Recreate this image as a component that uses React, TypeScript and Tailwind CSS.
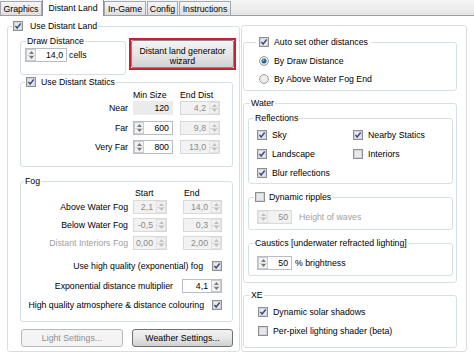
import type { ReactNode } from "react";

function Check({ on }: { on?: boolean }) {
  return (
    <svg width="10" height="10" viewBox="0 0 10 10" className="shrink-0">
      <rect x="0.5" y="0.5" width="9" height="9" fill="#fdfdfd" stroke="#8e8f8f" />
      <rect x="1.5" y="1.5" width="7" height="7" fill="#e6e8eb" stroke="#d2d4d8" />
      {on && <path d="M2.4 4.9 L4.1 7 L7.7 2.5" fill="none" stroke="#3c4e8a" strokeWidth="1.5" />}
    </svg>
  );
}

function Radio({ on }: { on?: boolean }) {
  return (
    <svg width="10" height="10" viewBox="0 0 10 10" className="shrink-0">
      <circle cx="5" cy="5" r="4.4" fill="#eceef0" stroke="#8e8f8f" strokeWidth="0.9" />
      {on && <circle cx="5" cy="5" r="2.5" fill="#2a6290" />}
      {on && <circle cx="4.4" cy="4.3" r="1" fill="#7fb8d8" />}
    </svg>
  );
}

function Arrows({ disabled }: { disabled?: boolean }) {
  const c = disabled ? "#c0c0c0" : "#7a7a7a";
  return (
    <div
      className={`flex flex-col w-[10px] h-full border ${
        disabled ? "border-[#e2e2e2] bg-[#f1f1f1]" : "border-[#c9ccd2] bg-[#f2f2f2]"
      }`}
    >
      <div className="flex-1 flex items-center justify-center border-b border-[#d6d6d6]">
        <svg width="5" height="3" viewBox="0 0 5 3">
          <path d="M0 3 L2.5 0 L5 3Z" fill={c} />
        </svg>
      </div>
      <div className="flex-1 flex items-center justify-center">
        <svg width="5" height="3" viewBox="0 0 5 3">
          <path d="M0 0 L2.5 3 L5 0Z" fill={c} />
        </svg>
      </div>
    </div>
  );
}

function Spin({
  value,
  className,
  side = "left",
  disabled,
  bare,
}: {
  value: string;
  className: string;
  side?: "left" | "right" | "none";
  disabled?: boolean;
  bare?: boolean;
}) {
  const box = bare
    ? "bg-[#ebebeb] border-[#ebebeb] text-black"
    : disabled
    ? "bg-[#f2f2f2] border-[#d9d9d9] text-[#8c8c8c]"
    : "bg-white border-[#b9bcc4] text-black";
  return (
    <div className={`flex items-stretch h-[14px] border shrink-0 ${box} ${className}`}>
      {side === "left" && <Arrows disabled={disabled} />}
      <div className="flex-1 flex items-center justify-end pr-[3px]">{value}</div>
      {side === "right" && <Arrows disabled={disabled} />}
    </div>
  );
}

function Group({
  legend,
  className,
  legendClass,
  children,
}: {
  legend: ReactNode;
  className: string;
  legendClass: string;
  children?: ReactNode;
}) {
  return (
    <fieldset className={`border border-[#d5dfe5] rounded-[3px] shrink-0 ${className}`}>
      <legend className={`px-[1px] leading-[10px] ${legendClass}`}>{legend}</legend>
      {children}
    </fieldset>
  );
}

function Tab({ label, active, className }: { label: string; active?: boolean; className: string }) {
  return (
    <div
      className={`flex items-center justify-center border border-b-0 shrink-0 ${
        active
          ? "h-[17px] -mb-[1px] bg-white border-[#8e939c] relative z-10"
          : "h-[14px] bg-gradient-to-b from-[#f6f6f6] to-[#dedede] border-[#a3a7ae]"
      } ${className}`}
    >
      {label}
    </div>
  );
}

function Row({ children, className }: { children: ReactNode; className: string }) {
  return <div className={`flex items-center ${className}`}>{children}</div>;
}

export default function App() {
  return (
    <div className="w-[474px] h-[361px] overflow-hidden bg-white text-black font-['Liberation_Sans',Arial,sans-serif] text-[8.75px] leading-[10px]">
      {/* Tab strip */}
      <div className="h-[16px] flex items-end border-b border-[#9a9ea6] bg-gradient-to-b from-[#f5f5f5] to-[#e6e6e6]">
        <Tab label="Graphics" className="w-[42px]" />
        <Tab label="Distant Land" active className="w-[62px]" />
        <Tab label="In-Game" className="w-[42px]" />
        <Tab label="Config" className="w-[31px] ml-[1px]" />
        <Tab label="Instructions" className="w-[52px] ml-[1px]" />
      </div>

      <div className="flex items-start">
        {/* Left column */}
        <Group
          className="ml-[7px] mt-[5px] w-[233px] h-[331px]"
          legendClass="ml-[4px]"
          legend={
            <span className="flex items-center gap-[7px]">
              <Check on />
              Use Distant Land
            </span>
          }
        >
          <div className="flex items-start mt-[5px] pl-[12px]">
            <Group className="w-[106px] h-[39px]" legendClass="ml-[5px]" legend="Draw Distance">
              <Row className="mt-[2px] ml-[4px]">
                <Spin value="14,0" className="w-[42px]" />
                <span className="ml-[2px]">cells</span>
              </Row>
            </Group>
            <div className="ml-[3px] mt-[2px] w-[107px] h-[32px] border-2 border-[#c8202e]">
              <div className="h-full border border-[#8a8a8a] rounded-[2px] bg-gradient-to-b from-[#f3f3f3] via-[#e6e6e6] to-[#d2d2d2] flex flex-col items-center justify-center pt-[3px] text-center">
                <span>Distant land generator</span>
                <span>wizard</span>
              </div>
            </div>
          </div>

          <Group
            className="mt-[2px] ml-[12px] w-[213px] h-[90px]"
            legendClass="ml-[4px]"
            legend={
              <span className="flex items-center gap-[5px]">
                <Check on />
                Use Distant Statics
              </span>
            }
          >
            <Row className="mt-[3px]">
              <div className="w-[107px]" />
              <div className="ml-[5px] w-[40px]">Min Size</div>
              <div className="ml-[7px]">End Dist</div>
            </Row>
            <Row className="mt-[1px]">
              <div className="w-[107px] text-right">Near</div>
              <Spin value="120" side="none" bare className="ml-[5px] w-[40px]" />
              <Spin value="4,2" side="right" disabled className="ml-[7px] w-[40px]" />
            </Row>
            <Row className="mt-[6px]">
              <div className="w-[107px] text-right">Far</div>
              <Spin value="600" className="ml-[5px] w-[40px]" />
              <Spin value="9,8" side="right" disabled className="ml-[7px] w-[40px]" />
            </Row>
            <Row className="mt-[5px]">
              <div className="w-[107px] text-right">Very Far</div>
              <Spin value="800" className="ml-[5px] w-[40px]" />
              <Spin value="13,0" side="right" disabled className="ml-[7px] w-[40px]" />
            </Row>
          </Group>

          <Group className="mt-[9px] ml-[12px] w-[213px] h-[146px]" legendClass="ml-[3px]" legend="Fog">
            <Row className="mt-[2px]">
              <div className="w-[107px]" />
              <div className="ml-[7px] w-[32px]">Start</div>
              <div className="ml-[17px]">End</div>
            </Row>
            <Row className="mt-[2px]">
              <div className="w-[107px] text-right">Above Water Fog</div>
              <Spin value="2,1" side="right" disabled className="ml-[5px] w-[34px]" />
              <Spin value="14,0" side="right" disabled className="ml-[16px] w-[39px]" />
            </Row>
            <Row className="mt-[4px]">
              <div className="w-[107px] text-right">Below Water Fog</div>
              <Spin value="-0,5" side="right" disabled className="ml-[5px] w-[34px]" />
              <Spin value="0,3" side="right" disabled className="ml-[16px] w-[39px]" />
            </Row>
            <Row className="mt-[4px]">
              <div className="w-[107px] text-right text-[#a0a0a0]">Distant Interiors Fog</div>
              <Spin value="0,00" side="right" disabled className="ml-[5px] w-[34px]" />
              <Spin value="2,00" side="right" disabled className="ml-[16px] w-[39px]" />
            </Row>
            <Row className="mt-[10px] h-[12px] justify-end pr-[10px]">
              <span>Use high quality (exponential) fog</span>
              <span className="ml-[9px]">
                <Check on />
              </span>
            </Row>
            <Row className="mt-[7px] justify-end pr-[10px]">
              <span>Exponential distance multiplier</span>
              <Spin value="4,1" side="right" className="ml-[9px] w-[40px]" />
            </Row>
            <Row className="mt-[6px] h-[12px] justify-end pr-[10px]">
              <span>High quality atmosphere &amp; distance colouring</span>
              <span className="ml-[8px]">
                <Check on />
              </span>
            </Row>
          </Group>

          <div className="flex mt-[7px]">
            <div className="ml-[13px] w-[102px] h-[18px] border border-[#b5b9bd] rounded-[3px] bg-[#f4f4f4] text-[#8f8f8f] flex items-center justify-center">
              Light Settings...
            </div>
            <div className="ml-[9px] w-[101px] h-[18px] border border-[#707070] rounded-[3px] bg-gradient-to-b from-[#f3f3f3] via-[#e6e6e6] to-[#d0d0d0] flex items-center justify-center">
              Weather Settings...
            </div>
          </div>
        </Group>

        {/* Right column */}
        <div className="ml-[1px] mt-[9px] w-[226px] h-[327px] border border-[#dcdcdc] rounded-[3px] shrink-0">
          <Group
            className="mt-[11px] ml-[1px] w-[214px] h-[54px]"
            legendClass="ml-[12px] px-[3px]"
            legend={
              <span className="flex items-center gap-[5px]">
                <Check on />
                Auto set other distances
              </span>
            }
          >
            <Row className="mt-[8px] h-[12px] pl-[15px] gap-[5px]">
              <Radio on />
              By Draw Distance
            </Row>
            <Row className="mt-[6px] h-[12px] pl-[15px] gap-[5px]">
              <Radio />
              By Above Water Fog End
            </Row>
          </Group>

          <Group className="mt-[7px] ml-[1px] w-[214px] h-[185px]" legendClass="ml-[6px]" legend="Water">
            <Group className="mt-[5px] ml-[4px] w-[205px] h-[71px]" legendClass="ml-[5px]" legend="Reflections">
              <Row className="mt-[6px] h-[12px] pl-[8px]">
                <span className="w-[96px] flex items-center gap-[5px]">
                  <Check on />
                  Sky
                </span>
                <span className="flex items-center gap-[5px]">
                  <Check on />
                  Nearby Statics
                </span>
              </Row>
              <Row className="mt-[7px] h-[12px] pl-[8px]">
                <span className="w-[96px] flex items-center gap-[5px]">
                  <Check on />
                  Landscape
                </span>
                <span className="flex items-center gap-[5px]">
                  <Check />
                  Interiors
                </span>
              </Row>
              <Row className="mt-[7px] h-[12px] pl-[8px] gap-[5px]">
                <Check on />
                Blur reflections
              </Row>
            </Group>

            <Group
              className="mt-[8px] ml-[4px] w-[205px] h-[38px]"
              legendClass="ml-[5px]"
              legend={
                <span className="flex items-center gap-[4px]">
                  <Check />
                  Dynamic ripples
                </span>
              }
            >
              <Row className="mt-[8px] ml-[8px]">
                <Spin value="50" disabled className="w-[35px]" />
                <span className="ml-[7px] text-[#a0a0a0]">Height of waves</span>
              </Row>
            </Group>

            <Group
              className="mt-[8px] ml-[4px] w-[205px] h-[38px]"
              legendClass="ml-[5px]"
              legend="Caustics [underwater refracted lighting]"
            >
              <Row className="mt-[8px] ml-[8px]">
                <Spin value="50" className="w-[35px]" />
                <span className="ml-[3px]">% brightness</span>
              </Row>
            </Group>
          </Group>

          <Group className="mt-[7px] ml-[1px] w-[214px] h-[58px]" legendClass="ml-[6px]" legend="XE">
            <Row className="mt-[6px] h-[12px] pl-[14px] gap-[5px]">
              <Check on />
              Dynamic solar shadows
            </Row>
            <Row className="mt-[7px] h-[12px] pl-[14px] gap-[5px]">
              <Check />
              Per-pixel lighting shader (beta)
            </Row>
          </Group>
        </div>
      </div>
    </div>
  );
}
